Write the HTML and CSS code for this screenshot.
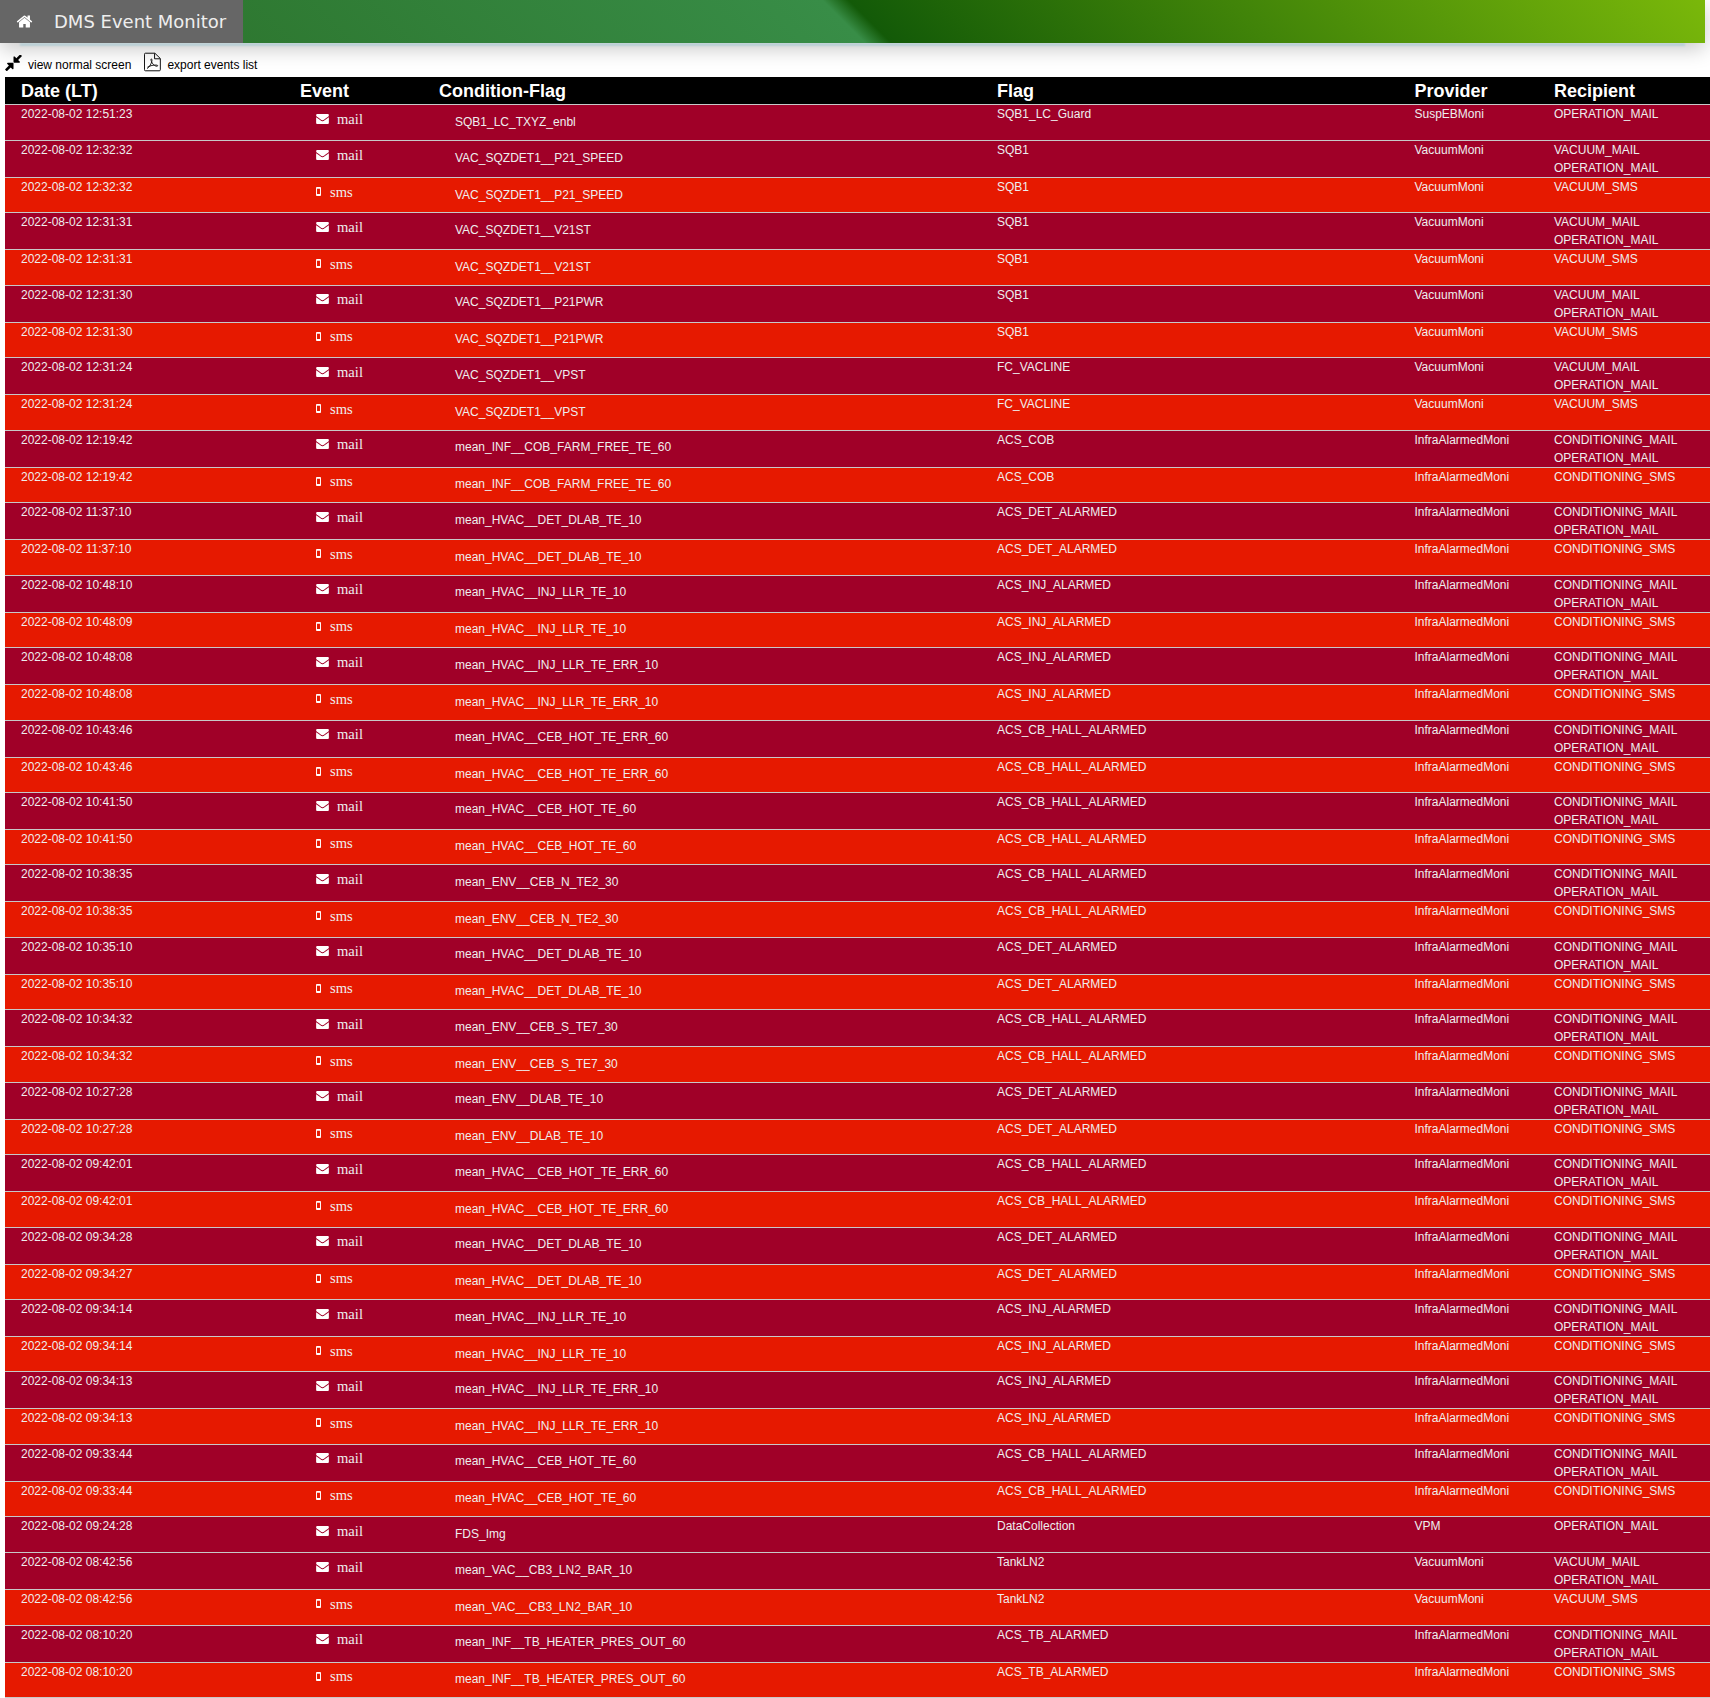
FILE: index.html
```html
<!DOCTYPE html>
<html lang="en">
<head>
<meta charset="utf-8">
<title>DMS Event Monitor</title>
<link rel="stylesheet" href="styles.css">
</head>
<body>
<svg class="defs" aria-hidden="true">
<symbol id="i-mail" viewBox="0 256 1792 1408"><path d="M1792 710v794q0 66-47 113t-113 47H160q-66 0-113-47T0 1504V710q44 49 101 87 362 246 497 345 57 42 92.5 65.5t94.5 48 110 24.5h2q51 0 110-24.5t94.5-48 92.5-65.5q170-123 498-345 57-39 100-87zm0-294q0 79-49 151t-122 123q-376 261-468 325-10 7-42.5 30.5t-54 38-52 32.5-57.5 27-50 9h-2q-23 0-50-9t-57.5-27-52-32.5-54-38T639 1015q-91-64-262-182.5T172 690q-62-42-117-115.5T0 438q0-78 41.5-130T160 256h1472q65 0 112.5 47t47.5 113z"/></symbol>
<symbol id="i-sms" viewBox="0 0 6 11"><path fill-rule="evenodd" d="M1 0h4a1 1 0 0 1 1 1v9a1 1 0 0 1-1 1H1a1 1 0 0 1-1-1V1a1 1 0 0 1 1-1zm.2 2v6.600h3.600V2z"/></symbol>
</svg>
<header class="topbar">
<div class="brand">
<svg class="home" viewBox="0 0 1792 1792"><path d="M1472 992v480q0 26-19 45t-45 19h-384v-384H768v384H384q-26 0-45-19t-19-45V992q0-1 .5-3t.5-3l575-474 575 474q1 2 1 6zm223-69-62 74q-8 9-21 11h-3q-13 0-21-7L896 424l-692 577q-12 8-24 7-13-2-21-11l-62-74q-8-10-7-23.5t11-21.5l719-599q32-26 76-26t76 26l244 204V288q0-14 9-23t23-9h192q14 0 23 9t9 23v408l219 182q10 8 11 21.5t-7 23.5z"/></svg>
<span class="brand-title">DMS Event Monitor</span>
</div>
</header>
<nav class="tools">
<a class="tool">
<svg class="tool-compress" viewBox="130 230 1530 1370"><path d="M896 960v448q0 26-19 45t-45 19-45-19l-144-144-332 332q-10 10-23 10t-23-10L151 1527q-10-10-10-23t10-23l332-332-144-144q-19-19-19-45t19-45 45-19h448q26 0 45 19t19 45zm755-672q0 13-10 23l-332 332 144 144q19 19 19 45t-19 45-45 19h-448q-26 0-45-19t-19-45V384q0-26 19-45t45-19 45 19l144 144 332-332q10-10 23-10t23 10l114 114q10 10 10 23z"/></svg>
<span>view normal screen</span>
</a>
<a class="tool">
<svg class="tool-pdf" viewBox="0 0 18 20"><path class="pdf-outline" d="M1.500.7h10l5.800 5.600v11.900a1.100 1.100 0 0 1-1.100 1.100H1.600a1.100 1.100 0 0 1-1.100-1.100V1.800A1.100 1.100 0 0 1 1.500.7zM11.200.9v5.700h5.900"/><path class="pdf-mark" d="M3.300 16.900c2-1 3.800-3.800 4.900-7.200.4-1.300.3-3-.4-3-.8 0-.5 2.100 1 4.500 1.200 1.900 3 3.300 5 3.300 1 0 1-1.100-.2-1.200-3.400-.4-7 .6-10 2.200"/></svg>
<span>export events list</span>
</a>
</nav>
<table class="events">
<thead>
<tr><th class="c-date">Date (LT)</th><th class="c-event">Event</th><th class="c-cond">Condition-Flag</th><th class="c-flag">Flag</th><th class="c-prov">Provider</th><th class="c-rec">Recipient</th></tr>
</thead>
<tbody>
<tr class="mail single"><td>2022-08-02 12:51:23</td><td class="ev"><span class="ev-in"><svg class="ic-mail"><use href="#i-mail"/></svg>mail</span></td><td class="cond">SQB1_LC_TXYZ_enbl</td><td>SQB1_LC_Guard</td><td>SuspEBMoni</td><td>OPERATION_MAIL</td></tr>
<tr class="mail"><td>2022-08-02 12:32:32</td><td class="ev"><span class="ev-in"><svg class="ic-mail"><use href="#i-mail"/></svg>mail</span></td><td class="cond">VAC_SQZDET1__P21_SPEED</td><td>SQB1</td><td>VacuumMoni</td><td>VACUUM_MAIL<br>OPERATION_MAIL</td></tr>
<tr class="sms"><td>2022-08-02 12:32:32</td><td class="ev"><span class="ev-in"><svg class="ic-sms"><use href="#i-sms"/></svg>sms</span></td><td class="cond">VAC_SQZDET1__P21_SPEED</td><td>SQB1</td><td>VacuumMoni</td><td>VACUUM_SMS</td></tr>
<tr class="mail"><td>2022-08-02 12:31:31</td><td class="ev"><span class="ev-in"><svg class="ic-mail"><use href="#i-mail"/></svg>mail</span></td><td class="cond">VAC_SQZDET1__V21ST</td><td>SQB1</td><td>VacuumMoni</td><td>VACUUM_MAIL<br>OPERATION_MAIL</td></tr>
<tr class="sms"><td>2022-08-02 12:31:31</td><td class="ev"><span class="ev-in"><svg class="ic-sms"><use href="#i-sms"/></svg>sms</span></td><td class="cond">VAC_SQZDET1__V21ST</td><td>SQB1</td><td>VacuumMoni</td><td>VACUUM_SMS</td></tr>
<tr class="mail"><td>2022-08-02 12:31:30</td><td class="ev"><span class="ev-in"><svg class="ic-mail"><use href="#i-mail"/></svg>mail</span></td><td class="cond">VAC_SQZDET1__P21PWR</td><td>SQB1</td><td>VacuumMoni</td><td>VACUUM_MAIL<br>OPERATION_MAIL</td></tr>
<tr class="sms"><td>2022-08-02 12:31:30</td><td class="ev"><span class="ev-in"><svg class="ic-sms"><use href="#i-sms"/></svg>sms</span></td><td class="cond">VAC_SQZDET1__P21PWR</td><td>SQB1</td><td>VacuumMoni</td><td>VACUUM_SMS</td></tr>
<tr class="mail"><td>2022-08-02 12:31:24</td><td class="ev"><span class="ev-in"><svg class="ic-mail"><use href="#i-mail"/></svg>mail</span></td><td class="cond">VAC_SQZDET1__VPST</td><td>FC_VACLINE</td><td>VacuumMoni</td><td>VACUUM_MAIL<br>OPERATION_MAIL</td></tr>
<tr class="sms"><td>2022-08-02 12:31:24</td><td class="ev"><span class="ev-in"><svg class="ic-sms"><use href="#i-sms"/></svg>sms</span></td><td class="cond">VAC_SQZDET1__VPST</td><td>FC_VACLINE</td><td>VacuumMoni</td><td>VACUUM_SMS</td></tr>
<tr class="mail"><td>2022-08-02 12:19:42</td><td class="ev"><span class="ev-in"><svg class="ic-mail"><use href="#i-mail"/></svg>mail</span></td><td class="cond">mean_INF__COB_FARM_FREE_TE_60</td><td>ACS_COB</td><td>InfraAlarmedMoni</td><td>CONDITIONING_MAIL<br>OPERATION_MAIL</td></tr>
<tr class="sms"><td>2022-08-02 12:19:42</td><td class="ev"><span class="ev-in"><svg class="ic-sms"><use href="#i-sms"/></svg>sms</span></td><td class="cond">mean_INF__COB_FARM_FREE_TE_60</td><td>ACS_COB</td><td>InfraAlarmedMoni</td><td>CONDITIONING_SMS</td></tr>
<tr class="mail"><td>2022-08-02 11:37:10</td><td class="ev"><span class="ev-in"><svg class="ic-mail"><use href="#i-mail"/></svg>mail</span></td><td class="cond">mean_HVAC__DET_DLAB_TE_10</td><td>ACS_DET_ALARMED</td><td>InfraAlarmedMoni</td><td>CONDITIONING_MAIL<br>OPERATION_MAIL</td></tr>
<tr class="sms"><td>2022-08-02 11:37:10</td><td class="ev"><span class="ev-in"><svg class="ic-sms"><use href="#i-sms"/></svg>sms</span></td><td class="cond">mean_HVAC__DET_DLAB_TE_10</td><td>ACS_DET_ALARMED</td><td>InfraAlarmedMoni</td><td>CONDITIONING_SMS</td></tr>
<tr class="mail"><td>2022-08-02 10:48:10</td><td class="ev"><span class="ev-in"><svg class="ic-mail"><use href="#i-mail"/></svg>mail</span></td><td class="cond">mean_HVAC__INJ_LLR_TE_10</td><td>ACS_INJ_ALARMED</td><td>InfraAlarmedMoni</td><td>CONDITIONING_MAIL<br>OPERATION_MAIL</td></tr>
<tr class="sms"><td>2022-08-02 10:48:09</td><td class="ev"><span class="ev-in"><svg class="ic-sms"><use href="#i-sms"/></svg>sms</span></td><td class="cond">mean_HVAC__INJ_LLR_TE_10</td><td>ACS_INJ_ALARMED</td><td>InfraAlarmedMoni</td><td>CONDITIONING_SMS</td></tr>
<tr class="mail"><td>2022-08-02 10:48:08</td><td class="ev"><span class="ev-in"><svg class="ic-mail"><use href="#i-mail"/></svg>mail</span></td><td class="cond">mean_HVAC__INJ_LLR_TE_ERR_10</td><td>ACS_INJ_ALARMED</td><td>InfraAlarmedMoni</td><td>CONDITIONING_MAIL<br>OPERATION_MAIL</td></tr>
<tr class="sms"><td>2022-08-02 10:48:08</td><td class="ev"><span class="ev-in"><svg class="ic-sms"><use href="#i-sms"/></svg>sms</span></td><td class="cond">mean_HVAC__INJ_LLR_TE_ERR_10</td><td>ACS_INJ_ALARMED</td><td>InfraAlarmedMoni</td><td>CONDITIONING_SMS</td></tr>
<tr class="mail"><td>2022-08-02 10:43:46</td><td class="ev"><span class="ev-in"><svg class="ic-mail"><use href="#i-mail"/></svg>mail</span></td><td class="cond">mean_HVAC__CEB_HOT_TE_ERR_60</td><td>ACS_CB_HALL_ALARMED</td><td>InfraAlarmedMoni</td><td>CONDITIONING_MAIL<br>OPERATION_MAIL</td></tr>
<tr class="sms"><td>2022-08-02 10:43:46</td><td class="ev"><span class="ev-in"><svg class="ic-sms"><use href="#i-sms"/></svg>sms</span></td><td class="cond">mean_HVAC__CEB_HOT_TE_ERR_60</td><td>ACS_CB_HALL_ALARMED</td><td>InfraAlarmedMoni</td><td>CONDITIONING_SMS</td></tr>
<tr class="mail"><td>2022-08-02 10:41:50</td><td class="ev"><span class="ev-in"><svg class="ic-mail"><use href="#i-mail"/></svg>mail</span></td><td class="cond">mean_HVAC__CEB_HOT_TE_60</td><td>ACS_CB_HALL_ALARMED</td><td>InfraAlarmedMoni</td><td>CONDITIONING_MAIL<br>OPERATION_MAIL</td></tr>
<tr class="sms"><td>2022-08-02 10:41:50</td><td class="ev"><span class="ev-in"><svg class="ic-sms"><use href="#i-sms"/></svg>sms</span></td><td class="cond">mean_HVAC__CEB_HOT_TE_60</td><td>ACS_CB_HALL_ALARMED</td><td>InfraAlarmedMoni</td><td>CONDITIONING_SMS</td></tr>
<tr class="mail"><td>2022-08-02 10:38:35</td><td class="ev"><span class="ev-in"><svg class="ic-mail"><use href="#i-mail"/></svg>mail</span></td><td class="cond">mean_ENV__CEB_N_TE2_30</td><td>ACS_CB_HALL_ALARMED</td><td>InfraAlarmedMoni</td><td>CONDITIONING_MAIL<br>OPERATION_MAIL</td></tr>
<tr class="sms"><td>2022-08-02 10:38:35</td><td class="ev"><span class="ev-in"><svg class="ic-sms"><use href="#i-sms"/></svg>sms</span></td><td class="cond">mean_ENV__CEB_N_TE2_30</td><td>ACS_CB_HALL_ALARMED</td><td>InfraAlarmedMoni</td><td>CONDITIONING_SMS</td></tr>
<tr class="mail"><td>2022-08-02 10:35:10</td><td class="ev"><span class="ev-in"><svg class="ic-mail"><use href="#i-mail"/></svg>mail</span></td><td class="cond">mean_HVAC__DET_DLAB_TE_10</td><td>ACS_DET_ALARMED</td><td>InfraAlarmedMoni</td><td>CONDITIONING_MAIL<br>OPERATION_MAIL</td></tr>
<tr class="sms"><td>2022-08-02 10:35:10</td><td class="ev"><span class="ev-in"><svg class="ic-sms"><use href="#i-sms"/></svg>sms</span></td><td class="cond">mean_HVAC__DET_DLAB_TE_10</td><td>ACS_DET_ALARMED</td><td>InfraAlarmedMoni</td><td>CONDITIONING_SMS</td></tr>
<tr class="mail"><td>2022-08-02 10:34:32</td><td class="ev"><span class="ev-in"><svg class="ic-mail"><use href="#i-mail"/></svg>mail</span></td><td class="cond">mean_ENV__CEB_S_TE7_30</td><td>ACS_CB_HALL_ALARMED</td><td>InfraAlarmedMoni</td><td>CONDITIONING_MAIL<br>OPERATION_MAIL</td></tr>
<tr class="sms"><td>2022-08-02 10:34:32</td><td class="ev"><span class="ev-in"><svg class="ic-sms"><use href="#i-sms"/></svg>sms</span></td><td class="cond">mean_ENV__CEB_S_TE7_30</td><td>ACS_CB_HALL_ALARMED</td><td>InfraAlarmedMoni</td><td>CONDITIONING_SMS</td></tr>
<tr class="mail"><td>2022-08-02 10:27:28</td><td class="ev"><span class="ev-in"><svg class="ic-mail"><use href="#i-mail"/></svg>mail</span></td><td class="cond">mean_ENV__DLAB_TE_10</td><td>ACS_DET_ALARMED</td><td>InfraAlarmedMoni</td><td>CONDITIONING_MAIL<br>OPERATION_MAIL</td></tr>
<tr class="sms"><td>2022-08-02 10:27:28</td><td class="ev"><span class="ev-in"><svg class="ic-sms"><use href="#i-sms"/></svg>sms</span></td><td class="cond">mean_ENV__DLAB_TE_10</td><td>ACS_DET_ALARMED</td><td>InfraAlarmedMoni</td><td>CONDITIONING_SMS</td></tr>
<tr class="mail"><td>2022-08-02 09:42:01</td><td class="ev"><span class="ev-in"><svg class="ic-mail"><use href="#i-mail"/></svg>mail</span></td><td class="cond">mean_HVAC__CEB_HOT_TE_ERR_60</td><td>ACS_CB_HALL_ALARMED</td><td>InfraAlarmedMoni</td><td>CONDITIONING_MAIL<br>OPERATION_MAIL</td></tr>
<tr class="sms"><td>2022-08-02 09:42:01</td><td class="ev"><span class="ev-in"><svg class="ic-sms"><use href="#i-sms"/></svg>sms</span></td><td class="cond">mean_HVAC__CEB_HOT_TE_ERR_60</td><td>ACS_CB_HALL_ALARMED</td><td>InfraAlarmedMoni</td><td>CONDITIONING_SMS</td></tr>
<tr class="mail"><td>2022-08-02 09:34:28</td><td class="ev"><span class="ev-in"><svg class="ic-mail"><use href="#i-mail"/></svg>mail</span></td><td class="cond">mean_HVAC__DET_DLAB_TE_10</td><td>ACS_DET_ALARMED</td><td>InfraAlarmedMoni</td><td>CONDITIONING_MAIL<br>OPERATION_MAIL</td></tr>
<tr class="sms"><td>2022-08-02 09:34:27</td><td class="ev"><span class="ev-in"><svg class="ic-sms"><use href="#i-sms"/></svg>sms</span></td><td class="cond">mean_HVAC__DET_DLAB_TE_10</td><td>ACS_DET_ALARMED</td><td>InfraAlarmedMoni</td><td>CONDITIONING_SMS</td></tr>
<tr class="mail"><td>2022-08-02 09:34:14</td><td class="ev"><span class="ev-in"><svg class="ic-mail"><use href="#i-mail"/></svg>mail</span></td><td class="cond">mean_HVAC__INJ_LLR_TE_10</td><td>ACS_INJ_ALARMED</td><td>InfraAlarmedMoni</td><td>CONDITIONING_MAIL<br>OPERATION_MAIL</td></tr>
<tr class="sms"><td>2022-08-02 09:34:14</td><td class="ev"><span class="ev-in"><svg class="ic-sms"><use href="#i-sms"/></svg>sms</span></td><td class="cond">mean_HVAC__INJ_LLR_TE_10</td><td>ACS_INJ_ALARMED</td><td>InfraAlarmedMoni</td><td>CONDITIONING_SMS</td></tr>
<tr class="mail"><td>2022-08-02 09:34:13</td><td class="ev"><span class="ev-in"><svg class="ic-mail"><use href="#i-mail"/></svg>mail</span></td><td class="cond">mean_HVAC__INJ_LLR_TE_ERR_10</td><td>ACS_INJ_ALARMED</td><td>InfraAlarmedMoni</td><td>CONDITIONING_MAIL<br>OPERATION_MAIL</td></tr>
<tr class="sms"><td>2022-08-02 09:34:13</td><td class="ev"><span class="ev-in"><svg class="ic-sms"><use href="#i-sms"/></svg>sms</span></td><td class="cond">mean_HVAC__INJ_LLR_TE_ERR_10</td><td>ACS_INJ_ALARMED</td><td>InfraAlarmedMoni</td><td>CONDITIONING_SMS</td></tr>
<tr class="mail"><td>2022-08-02 09:33:44</td><td class="ev"><span class="ev-in"><svg class="ic-mail"><use href="#i-mail"/></svg>mail</span></td><td class="cond">mean_HVAC__CEB_HOT_TE_60</td><td>ACS_CB_HALL_ALARMED</td><td>InfraAlarmedMoni</td><td>CONDITIONING_MAIL<br>OPERATION_MAIL</td></tr>
<tr class="sms"><td>2022-08-02 09:33:44</td><td class="ev"><span class="ev-in"><svg class="ic-sms"><use href="#i-sms"/></svg>sms</span></td><td class="cond">mean_HVAC__CEB_HOT_TE_60</td><td>ACS_CB_HALL_ALARMED</td><td>InfraAlarmedMoni</td><td>CONDITIONING_SMS</td></tr>
<tr class="mail single"><td>2022-08-02 09:24:28</td><td class="ev"><span class="ev-in"><svg class="ic-mail"><use href="#i-mail"/></svg>mail</span></td><td class="cond">FDS_Img</td><td>DataCollection</td><td>VPM</td><td>OPERATION_MAIL</td></tr>
<tr class="mail"><td>2022-08-02 08:42:56</td><td class="ev"><span class="ev-in"><svg class="ic-mail"><use href="#i-mail"/></svg>mail</span></td><td class="cond">mean_VAC__CB3_LN2_BAR_10</td><td>TankLN2</td><td>VacuumMoni</td><td>VACUUM_MAIL<br>OPERATION_MAIL</td></tr>
<tr class="sms"><td>2022-08-02 08:42:56</td><td class="ev"><span class="ev-in"><svg class="ic-sms"><use href="#i-sms"/></svg>sms</span></td><td class="cond">mean_VAC__CB3_LN2_BAR_10</td><td>TankLN2</td><td>VacuumMoni</td><td>VACUUM_SMS</td></tr>
<tr class="mail"><td>2022-08-02 08:10:20</td><td class="ev"><span class="ev-in"><svg class="ic-mail"><use href="#i-mail"/></svg>mail</span></td><td class="cond">mean_INF__TB_HEATER_PRES_OUT_60</td><td>ACS_TB_ALARMED</td><td>InfraAlarmedMoni</td><td>CONDITIONING_MAIL<br>OPERATION_MAIL</td></tr>
<tr class="sms"><td>2022-08-02 08:10:20</td><td class="ev"><span class="ev-in"><svg class="ic-sms"><use href="#i-sms"/></svg>sms</span></td><td class="cond">mean_INF__TB_HEATER_PRES_OUT_60</td><td>ACS_TB_ALARMED</td><td>InfraAlarmedMoni</td><td>CONDITIONING_SMS</td></tr>
</tbody>
</table>
</body>
</html>
```
FILE: styles.css
```css
html, body {
  margin: 0;
  padding: 0;
  background: #fff;
  font-family: "Liberation Sans", Arial, sans-serif;
  font-size: 12px;
  line-height: 18px;
  color: #000;
}

.defs {
  display: none;
}

.topbar {
  width: 1705px;
  height: 43px;
  display: flex;
  background: linear-gradient(45deg, #2a7028 0%, #388d47 49.5%, #135a08 51%, #7ab80a 100%);
  box-shadow: 0 23px 2px -20px #b9d0d6, 0 6px 20px rgba(0, 0, 0, 0.22);
}

.brand {
  width: 243px;
  display: flex;
  align-items: center;
  padding-left: 16px;
  box-sizing: border-box;
  background: #666;
  color: #eee;
}

.home {
  width: 17px;
  height: 17px;
  fill: #fff;
  margin-right: 21px;
}

.brand-title {
  font-family: "DejaVu Sans", sans-serif;
  font-size: 18px;
}

.tools {
  height: 34px;
  display: flex;
  align-items: flex-end;
  gap: 13px;
  padding-left: 5px;
  box-sizing: border-box;
}

.tool {
  display: flex;
  align-items: flex-end;
  gap: 6px;
  height: 25px;
}

.tool span {
  line-height: 18px;
  margin-bottom: 3px;
}

.tool-compress {
  width: 17px;
  height: 16px;
  margin-bottom: 6px;
  fill: #000;
}

.tool-pdf {
  width: 17px;
  height: 20px;
  margin-bottom: 5px;
  fill: none;
}

.pdf-outline {
  stroke: #000;
  stroke-width: 1;
}

.pdf-mark {
  stroke: #000;
  stroke-width: 0.9;
}

.events {
  margin-left: 5px;
  width: 1705px;
  table-layout: fixed;
  border-collapse: collapse;
  color: #eee;
}

.events th {
  box-sizing: border-box;
  background: #000;
  color: #fff;
  font-size: 18px;
  font-weight: bold;
  line-height: 26px;
  padding: 1px 0 0 16px;
  text-align: left;
  border-bottom: 1px solid #c8c8c8;
}

.c-date { width: 279px; }
.c-event { width: 139px; }
.c-cond { width: 558px; }
.c-flag { width: 417.5px; }
.c-prov { width: 139.5px; }
.c-rec { width: 172px; }

.events td {
  box-sizing: border-box;
  padding: 0 0 0 16px;
  vertical-align: top;
  border-bottom: 1px solid #c8c8c8;
  overflow: hidden;
  white-space: nowrap;
}

.mail td { height: 37px; background: #a00028; }
.mail.single td { height: 36px; }
.sms td { height: 35.45px; background: #e61900; }

.events .cond {
  padding: 7.5px 16px 0 32px;
}

.events .ev {
  padding: 4.5px 0 0 32px;
}

.ev-in {
  display: flex;
  align-items: center;
  font-family: "Liberation Serif", "Times New Roman", serif;
  font-size: 14.6px;
  line-height: 18px;
}

.ic-mail {
  width: 13px;
  height: 10px;
  margin-right: 8px;
  fill: #fff;
}

.ic-sms {
  width: 5px;
  height: 9px;
  margin-right: 9px;
  fill: #fff;
}
```
